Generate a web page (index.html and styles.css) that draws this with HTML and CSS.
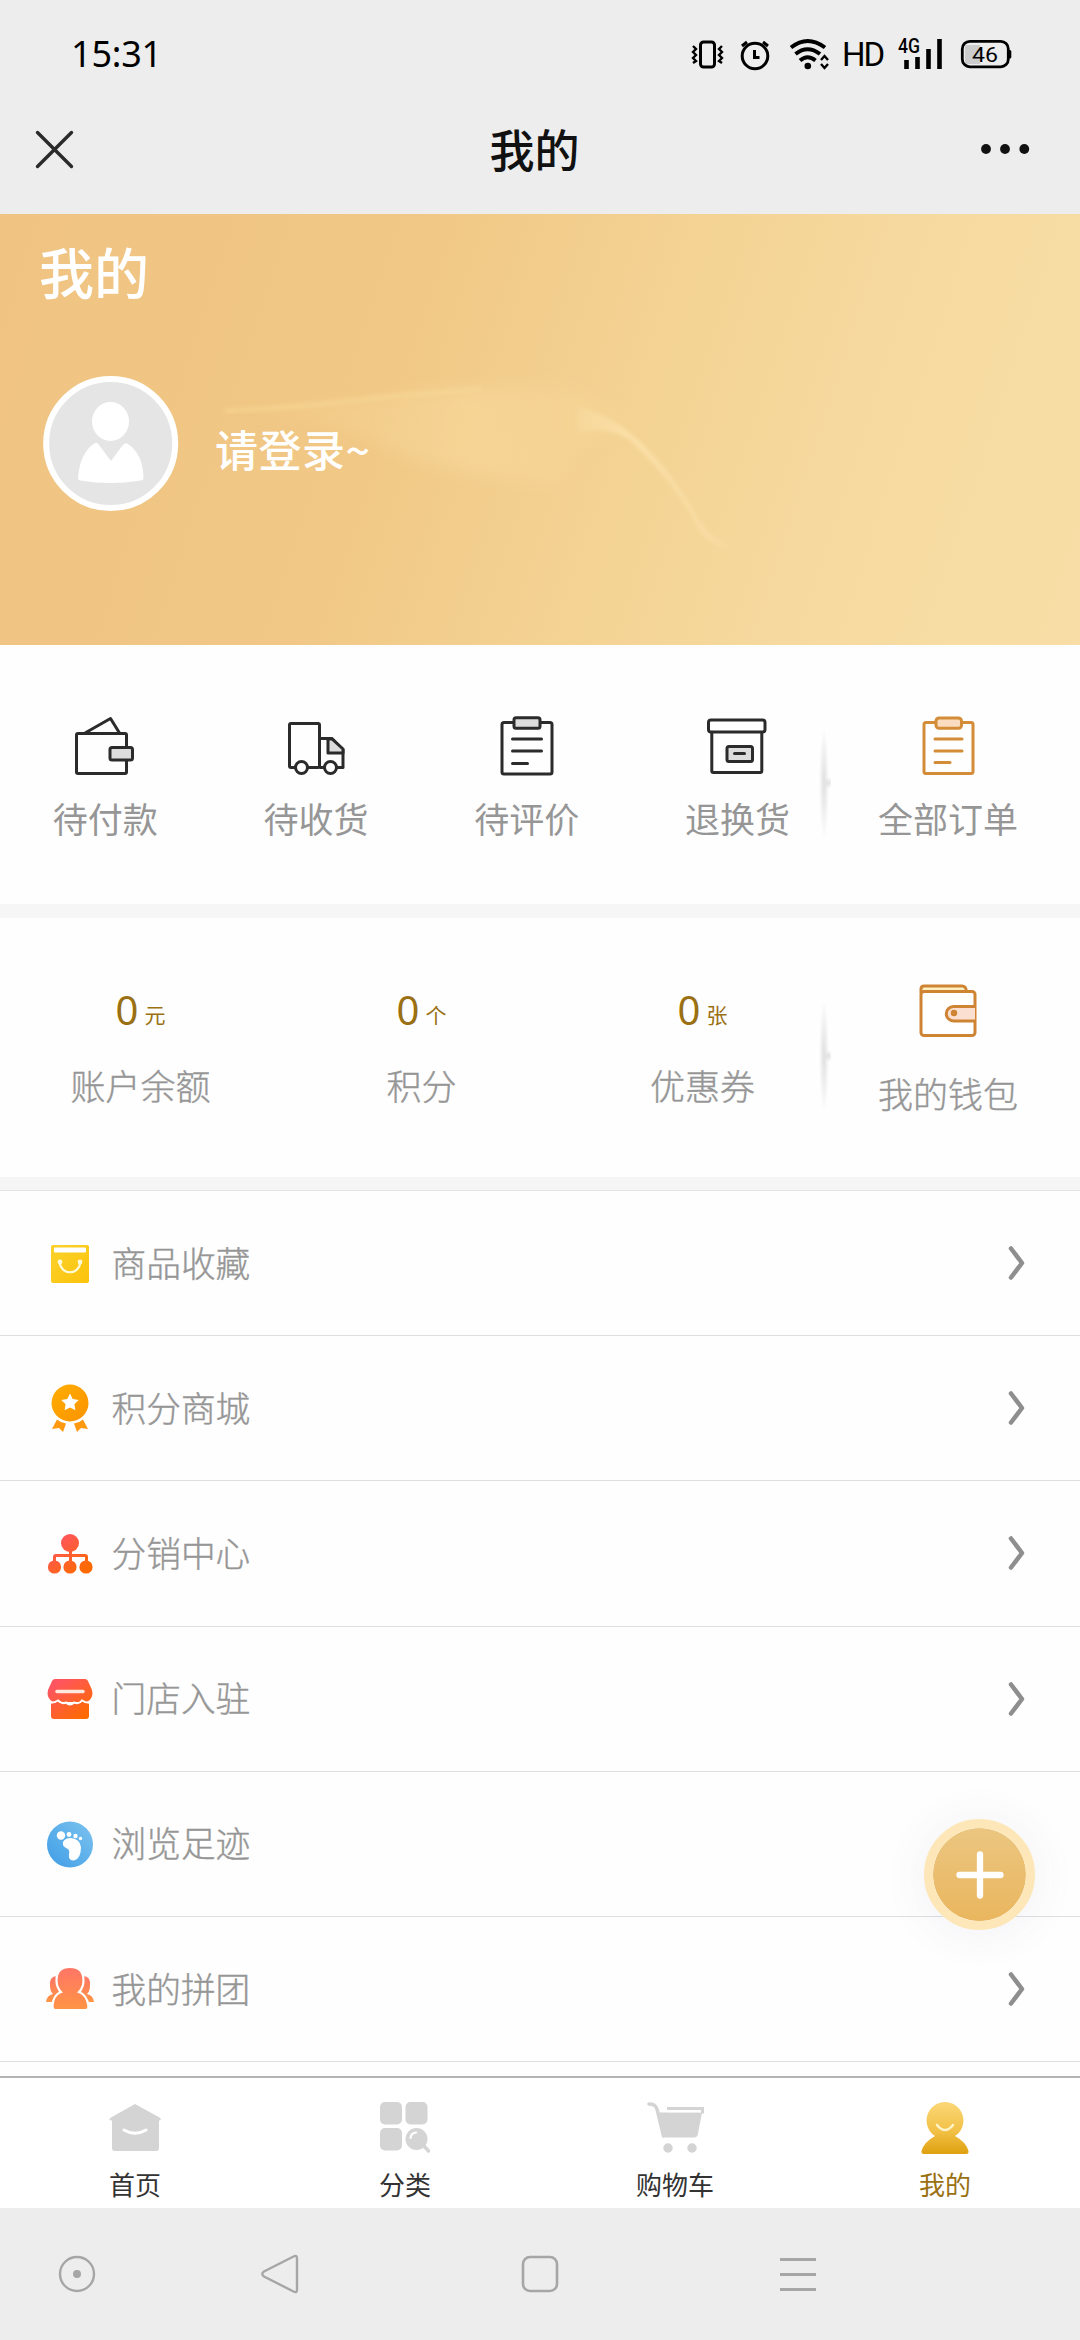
FILE: index.html
```html
<!DOCTYPE html>
<html lang="zh-CN">
<head>
<meta charset="utf-8">
<title>我的</title>
<link rel="stylesheet" href="styles.css">
</head>
<body>
<div class="screen">
  <header class="top">
    <div class="status">
      <span class="time">15:31</span>
      <div class="indicators">
        <svg width="150" height="36" viewBox="690 36 150 36">
          <g fill="none" stroke="#000" stroke-width="3">
            <rect x="700.500" y="42" width="14" height="25" rx="3"/>
            <path d="M693 46l3 3-3 3 3 3-3 3 3 3-3 2M722 46l-3 3 3 3-3 3 3 3-3 3 3 2" stroke-width="2.400"/>
            <circle cx="755" cy="56" r="12.800"/>
            <path d="M754.500 50v7.500h5M742 46l5-4M768 46l-5-4"/>
            <path d="M791 47.500Q807.500 34.500 825 47.500" stroke-width="4"/>
            <path d="M795.500 54Q807.500 44.500 820 54M800 60.500Q807.500 54 815.500 60.500" stroke-width="4"/>
            <path d="M821 60l3.500-4 3.500 4M821 64l3.500 4 3.500-4" stroke-width="2.400"/>
          </g>
          <circle cx="807.800" cy="66" r="3.300"/>
        </svg>
        <span class="hd">HD</span>
        <svg width="124" height="36" viewBox="890 36 124 36">
          <path d="M906.500 60v9M917.500 57v12M928.500 49v20M939.500 39v30" fill="none" stroke="#000" stroke-width="4.600"/>
          <text class="net" x="898" y="53" textLength="22" lengthAdjust="spacingAndGlyphs">4G</text>
          <path d="M966 45h14v19h-14q-1 0-1-2V47q0-2 1-2z" fill="#ccc"/>
          <rect x="962.300" y="41.400" width="46" height="25.400" rx="7.500" fill="none" stroke="#000" stroke-width="2.800"/>
          <rect x="1008" y="50" width="3.300" height="8.500" rx="1.500"/>
          <text class="level" x="972" y="62" textLength="26" lengthAdjust="spacingAndGlyphs">46</text>
        </svg>
      </div>
    </div>
    <div class="titlebar">
      <svg width="40" height="40" viewBox="34 129 40 40"><path d="M37.500 132.500l34 34M71.500 132.500l-34 34" stroke="#2a2a2a" stroke-width="3.400" stroke-linecap="round"/></svg>
      <h1>我的</h1>
      <svg width="50" height="12" viewBox="980 143 50 12" fill="#111"><circle cx="986" cy="149" r="4.900"/><circle cx="1005" cy="149" r="4.900"/><circle cx="1024.300" cy="149" r="4.900"/></svg>
    </div>
  </header>

  <section class="hero">
    <svg class="hero-art" width="1080" height="431" viewBox="0 214 1080 431">
      <defs>
        <linearGradient id="streak" x1="0" x2="1"><stop offset="0" stop-color="#fbe3a6" stop-opacity="0"/><stop offset=".6" stop-color="#fbe3a6" stop-opacity=".35"/><stop offset="1" stop-color="#fbe3a6" stop-opacity="0"/></linearGradient>
        <linearGradient id="tail" x1="0" x2="1"><stop offset="0" stop-color="#fde3ac" stop-opacity=".25"/><stop offset=".4" stop-color="#fde3ac" stop-opacity=".9"/><stop offset="1" stop-color="#fde3ac" stop-opacity=".4"/></linearGradient>
        <filter id="soft"><feGaussianBlur stdDeviation="2"/></filter>
        <filter id="softer" x="-10%" y="-20%" width="120%" height="140%"><feGaussianBlur stdDeviation="8"/></filter>
      </defs>
      <path d="M220 412Q300 408 400 396T560 386Q620 400 640 430Q580 430 560 484Q440 475 370 440Q300 412 220 412z" fill="url(#streak)" filter="url(#softer)"/>
      <path d="M225 411Q290 408 350 401T480 389" fill="none" stroke="#fae09d" stroke-opacity=".6" stroke-width="3" filter="url(#soft)"/>
      <path d="M577 406Q612 415 640 442T692 508Q706 538 732 548Q706 546 694 520Q672 478 630 440Q608 426 577 433z" fill="url(#tail)" filter="url(#soft)"/>
    </svg>
    <h2>我的</h2>
    <div class="user">
      <svg class="avatar" width="136" height="136" viewBox="43 376 136 136">
        <circle cx="110.700" cy="443.500" r="64.500" fill="#e6e5e5" stroke="#fff" stroke-width="6"/>
        <ellipse cx="110.500" cy="421.500" rx="18.500" ry="19.500" fill="#fff"/>
        <path d="M95 443q2-1 4 2l12 16 11-15q3-4 6-2 15 10 15.500 34 0 2-3 2.500-30 5-60 0-3-1-2.500-3 2-25 17-34.500z" fill="#fff"/>
      </svg>
      <span>请登录~</span>
    </div>
  </section>

  <section class="panel orders">
    <div class="cell">
      <svg width="60" height="60" viewBox="75 716 60 60" fill="none" stroke="#2b2b2b" stroke-width="3" stroke-linejoin="round"><path d="M85 733l25.500-14.500 9 14.500"/><rect x="76.500" y="733.500" width="50" height="40" rx="1.500"/><rect x="110" y="747.500" width="22.500" height="12.500" rx="2" fill="#ddd"/></svg>
      <span>待付款</span>
    </div>
    <div class="cell">
      <svg width="60" height="60" viewBox="286 716 60 60" fill="none" stroke="#2b2b2b" stroke-width="3" stroke-linejoin="round"><rect x="289.500" y="723.500" width="30" height="44" rx="1.500"/><path d="M319.500 738.500h12.500l11 11v18h-23.500"/><path d="M328 739v14h15v-4l-11-10z" fill="#ddd"/><circle cx="301.500" cy="767.500" r="6" fill="#fff"/><circle cx="330.500" cy="767.500" r="6" fill="#fff"/></svg>
      <span>待收货</span>
    </div>
    <div class="cell">
      <svg width="60" height="60" viewBox="497 716 60 60" fill="none" stroke="#2b2b2b" stroke-width="3" stroke-linejoin="round" stroke-linecap="round"><rect x="502" y="722.500" width="50" height="51.500" rx="2"/><rect x="514" y="717.800" width="26" height="10.500" rx="2" fill="#ddd"/><path d="M512.500 739h29M512.500 751h29M512.500 763.500h15"/></svg>
      <span>待评价</span>
    </div>
    <div class="cell">
      <svg width="60" height="60" viewBox="708 716 60 60" fill="none" stroke="#2b2b2b" stroke-width="3" stroke-linejoin="round" stroke-linecap="round"><rect x="712.800" y="731" width="50" height="41.500" rx="1.500"/><rect x="709.500" y="720" width="56.500" height="12" rx="2.500" fill="#fff"/><rect x="728" y="746.500" width="25.500" height="15" rx="2" fill="#ddd"/><path d="M735.500 753.500h10"/></svg>
      <span>退换货</span>
    </div>
    <div class="cell">
      <svg width="60" height="60" viewBox="918 716 60 60" fill="none" stroke="#d38c37" stroke-width="3" stroke-linejoin="round" stroke-linecap="round"><rect x="924" y="722.500" width="49" height="51" rx="2"/><rect x="936" y="718" width="25.500" height="10.300" rx="3" fill="#fbdcc0"/><path d="M935 739h27M935 751h27M935 762.500h15"/></svg>
      <span>全部订单</span>
    </div>
    <i class="divider"></i>
  </section>

  <section class="panel assets">
    <div class="cell"><b>0<small>元</small></b><span>账户余额</span></div>
    <div class="cell"><b>0<small>个</small></b><span>积分</span></div>
    <div class="cell"><b>0<small>张</small></b><span>优惠券</span></div>
    <div class="cell wallet">
      <svg width="60" height="60" viewBox="918 981 60 60" fill="none" stroke="#cf8434" stroke-width="3" stroke-linejoin="round"><path d="M921 993v-4q0-3 3-3h38q4 0 4.500 5.500" fill="#fdf0c0"/><rect x="921" y="991.500" width="54" height="44" rx="3" fill="#fff"/><path d="M975 1006.500h-21.500a7.200 7.200 0 0 0 0 14.400H975" fill="#fbe0d2"/><circle cx="954" cy="1013" r="1.700"/></svg>
      <span>我的钱包</span>
    </div>
    <i class="divider"></i>
  </section>

  <main class="list">
    <svg width="0" height="0" class="defs"><defs>
      <linearGradient id="yellow" x1="0" y1="0" x2="1" y2="1"><stop offset="0" stop-color="#fad22d"/><stop offset="1" stop-color="#fcc30b"/></linearGradient>
      <linearGradient id="orange" x1="0" y1="0" x2="1" y2="1"><stop offset="0" stop-color="#ffae00"/><stop offset="1" stop-color="#fb9200"/></linearGradient>
      <linearGradient id="red" gradientUnits="userSpaceOnUse" x1="12" y1="10" x2="38" y2="44"><stop offset="0" stop-color="#ff5560"/><stop offset="1" stop-color="#ff6a00"/></linearGradient>
      <linearGradient id="blue" x1="1" y1="0" x2="0" y2="1"><stop offset="0" stop-color="#7cc3ef"/><stop offset="1" stop-color="#409de6"/></linearGradient>
      <linearGradient id="coral" x1="0" y1="0" x2="0" y2="1"><stop offset="0" stop-color="#ff7567"/><stop offset="1" stop-color="#ff9544"/></linearGradient>
      <symbol id="chevron" viewBox="0 0 18 36"><path d="M3 3.500l11 14.500L3 32.500" fill="none" stroke="#8e8e8e" stroke-width="4.500" stroke-linecap="round" stroke-linejoin="round"/></symbol>
    </defs></svg>
    <div class="row">
      <svg width="50" height="50" viewBox="0 0 50 50"><rect x="6" y="7" width="38" height="38" rx="2" fill="url(#yellow)"/><rect x="9" y="9.500" width="32" height="5" rx="1" fill="#fff"/><path d="M14.500 24.500c2 13 19 13 21 0" fill="none" stroke="#fffbd8" stroke-width="2.200"/><circle cx="15" cy="24" r="2.400" fill="#fffbd8"/><circle cx="35" cy="24" r="2.400" fill="#fffbd8"/></svg>
      <span>商品收藏</span><svg class="go" width="18" height="36"><use href="#chevron"/></svg>
    </div>
    <div class="row">
      <svg width="50" height="50" viewBox="0 0 50 50"><circle cx="25" cy="20" r="18.500" fill="url(#orange)"/><path d="M25 10.500l2.700 5.500 6 .900-4.300 4.300 1 6.100-5.400-2.900-5.400 2.900 1-6.100-4.300-4.300 6-.900z" fill="#fff"/><path d="M12 36.500q4 3.500 9 4l-3 8.500-4-4-7 1zM38 36.500q-4 3.500-9 4l3 8.500 4-4 7 1z" fill="#ff9a10"/></svg>
      <span>积分商城</span><svg class="go" width="18" height="36"><use href="#chevron"/></svg>
    </div>
    <div class="row">
      <svg width="50" height="50" viewBox="0 0 50 50"><g fill="url(#red)"><circle cx="25" cy="15" r="9"/><circle cx="9.500" cy="39" r="6.600"/><circle cx="25" cy="39" r="6.600"/><circle cx="41" cy="39" r="6.600"/><path d="M24 22h3v4h13q3 0 3 3v5h-3v-5H27v5h-3v-5H11v5H8v-5q0-3 3-3h13z"/></g></svg>
      <span>分销中心</span><svg class="go" width="18" height="36"><use href="#chevron"/></svg>
    </div>
    <div class="row">
      <svg width="50" height="50" viewBox="0 0 50 50"><path d="M10 5h30q2 0 3 2l4 9q2 8-5 12H8q-7-4-5-12l4-9q1-2 3-2z" fill="url(#red)"/><path d="M6 29q4 0 7-2 4 4 8 2 4 4 8 0 5 2 8-2 3 2 7 2v13q0 3-3 3H9q-3 0-3-3z" fill="url(#red)"/><path d="M3 28.500q6 1 10-2 4 4 8 2 4 4 8 0 5 2 8-2 4 3 10 2" fill="none" stroke="#fff" stroke-width="2"/><path d="M12 17.500h26" stroke="#ffe9df" stroke-width="3.500" stroke-linecap="round"/></svg>
      <span>门店入驻</span><svg class="go" width="18" height="36"><use href="#chevron"/></svg>
    </div>
    <div class="row covered">
      <svg width="50" height="50" viewBox="0 0 50 50"><circle cx="25" cy="25.500" r="23" fill="url(#blue)"/><g fill="#fff"><circle cx="16" cy="16.500" r="4.200"/><circle cx="24" cy="15.500" r="2.400"/><circle cx="30.500" cy="17" r="2.200"/><circle cx="35.500" cy="19.500" r="1.700"/><path d="M18 23q2-4 8-4 9 1 10 9 0 12-7 13.500-6 0-5-6 1-5-2-6-5-2-4-6.500z"/></g></svg>
      <span>浏览足迹</span>
    </div>
    <div class="row">
      <svg width="50" height="50" viewBox="0 0 50 50"><path d="M12 12q-8 0-7 10 0 5 3 8-6 1-7 8h14zM38 12q8 0 7 10 0 5-3 8 6 1 7 8H35z" fill="url(#coral)"/><path d="M25 3q13.500 0 13.500 13.500 0 7-4.500 11.500 8 3 9.500 14 0 4-3 4H10.500q-3 0-3-4Q8 31 16 28q-4.500-4.500-4.500-11.500Q11.500 3 25 3z" fill="url(#coral)" stroke="#fff" stroke-width="2.200"/></svg>
      <span>我的拼团</span><svg class="go" width="18" height="36"><use href="#chevron"/></svg>
    </div>
    <button class="fab" aria-label="更多"><svg width="50" height="50" viewBox="0 0 50 50"><path d="M25 4.500v41M4.500 25h41" stroke="#fff" stroke-width="6.300" stroke-linecap="round"/></svg></button>
  </main>

  <nav class="tabs">
    <a><svg width="60" height="60" viewBox="105 2097 60 60"><path d="M135 2104l24.500 13.500q3 2.500-.5 3v27.500q0 3-3 3h-41q-3 0-3-3v-27.500q-5-.500-1-3z" fill="#d4d4d4"/><path d="M124 2130q11 6.500 22 0" fill="none" stroke="#fff" stroke-width="3" stroke-linecap="round"/></svg><span>首页</span></a>
    <a><svg width="60" height="60" viewBox="375 2097 60 60" fill="#d4d4d4"><rect x="380" y="2102" width="22" height="22.500" rx="5"/><rect x="405.500" y="2102" width="22" height="22.500" rx="5"/><rect x="380" y="2128" width="22" height="22.500" rx="5"/><circle cx="416.500" cy="2139" r="11"/><path d="M424 2146l4.500 5" stroke="#d4d4d4" stroke-width="3.500" stroke-linecap="round"/><path d="M410.500 2138q.5-5 5.500-5.500" fill="none" stroke="#fff" stroke-width="2.200" stroke-linecap="round"/></svg><span>分类</span></a>
    <a><svg width="60" height="60" viewBox="645 2097 60 60" fill="#d4d4d4"><path d="M649 2104q6 0 7.500 4l1 3 6 25" fill="none" stroke="#d4d4d4" stroke-width="3.500" stroke-linecap="round"/><path d="M657 2112.500h45l-4 21q-.500 4-4 4h-28q-3.500 0-4-3.500z"/><path d="M667 2108.500h35.500v5" fill="none" stroke="#d4d4d4" stroke-width="3"/><path d="M668 2111.500h33" stroke="#fff" stroke-width="1.500"/><circle cx="668" cy="2148" r="4.700"/><circle cx="692" cy="2148" r="4.700"/></svg><span>购物车</span></a>
    <a class="active"><svg width="60" height="60" viewBox="915 2097 60 60"><defs><linearGradient id="gold" x1="0" y1="0" x2="0" y2="1"><stop offset="0" stop-color="#fbd777"/><stop offset=".55" stop-color="#f2c147"/><stop offset="1" stop-color="#dfa010"/></linearGradient></defs><path d="M945 2102a18.500 18.500 0 0 1 10 34q11 6 13.500 15 .500 3-2.500 3h-42q-3 0-2.500-3 2.500-9 13.500-15a18.500 18.500 0 0 1 10-34z" fill="url(#gold)"/><path d="M937 2125q8 10 16 0" fill="none" stroke="#fff3c8" stroke-width="2.600" stroke-linecap="round"/></svg><span>我的</span></a>
  </nav>

  <footer class="sysnav">
    <svg width="40" height="44" viewBox="57 2252 40 44" fill="none" stroke="#a6a6a6" stroke-width="2.400"><circle cx="77" cy="2274" r="17"/><circle cx="77" cy="2274" r="4" fill="#a6a6a6" stroke="none"/></svg>
    <svg width="40" height="44" viewBox="260 2252 40 44" fill="none" stroke="#a6a6a6" stroke-width="2.400"><path d="M293.500 2256.500Q297 2254.500 297 2258.500v31q0 4-3.500 2L264 2276.500q-3.500-2.500 0-5z"/></svg>
    <svg width="40" height="44" viewBox="520 2252 40 44" fill="none" stroke="#a6a6a6" stroke-width="2.600"><rect x="523" y="2257" width="34" height="34" rx="7"/></svg>
    <svg width="40" height="44" viewBox="778 2252 40 44" stroke="#a6a6a6" stroke-width="2.800"><path d="M780 2259.500h36M780 2274.500h36M780 2289.500h36"/></svg>
  </footer>
</div>
</body>
</html>
```

FILE: styles.css
```css
* { box-sizing: border-box; margin: 0; padding: 0; }
body {
  width: 1080px;
  background: #fefefe;
  color: #969696;
  font-family: "Noto Sans CJK SC", sans-serif;
  font-size: 35px;
  line-height: 1;
}
svg { display: block; flex: none; }
.screen { display: flex; flex-direction: column; height: 2340px; overflow: hidden; }

.top { height: 214px; background: #ededed; color: #111; }
.status {
  display: flex;
  align-items: flex-start;
  justify-content: space-between;
  height: 86px;
  padding: 36px 66px 0 71px;
}
.time { font: 36px/36px "Noto Sans", sans-serif; letter-spacing: -.2px; color: #000; }
.indicators { display: flex; }
.hd { width: 50px; padding-left: 2px; font: 33px/37px "Roboto", sans-serif; letter-spacing: -2px; color: #000; }
.net { font: 500 19.500px "Roboto", sans-serif; }
.level { font: 21px "Roboto", sans-serif; }
.titlebar {
  display: flex;
  align-items: center;
  justify-content: space-between;
  height: 126px;
  padding: 0 50px 0 34px;
}
.titlebar h1 { padding-left: 15px; font-size: 45px; font-weight: 500; line-height: 60px; }

.hero {
  position: relative;
  height: 431px;
  padding: 23px 39px;
  background: linear-gradient(108deg, #f0c382 0%, #f1c886 36%, #f4d495 60%, #f6daa0 78%, #f8dea6 100%);
  color: #fff;
}
.hero-art { position: absolute; inset: 0; }
.hero h2 { position: relative; font-size: 55px; font-weight: 500; line-height: 66px; }
.user {
  position: relative;
  display: flex;
  align-items: center;
  gap: 36px;
  margin: 73px 0 0 4px;
}
.user span { font-size: 43px; font-weight: 500; line-height: 60px; letter-spacing: .5px; padding-top: 7px; }

.panel { position: relative; display: grid; }
.cell { display: flex; flex-direction: column; align-items: center; }
.cell span { line-height: 44px; }
.orders {
  grid-template-columns: repeat(5, 210.700px);
  height: 273px;
  padding-top: 71px;
  border-bottom: 14px solid #f6f6f6;
}
.orders .cell { gap: 20px; }
.assets {
  grid-template-columns: repeat(3, 281px) 210px;
  height: 272px;
  padding-top: 63px;
  border-bottom: 13px solid #f5f5f5;
  font-weight: 300;
}
.assets span, .row span { -webkit-text-stroke: .4px currentColor; }
.assets b {
  display: flex;
  align-items: baseline;
  gap: 6px;
  height: 60px;
  font: 400 40px/58px "Noto Sans", sans-serif;
  color: #9a7012;
}
.assets small { font: 400 21px/30px "Noto Sans CJK SC", sans-serif; position: relative; top: -2px; }
.assets .cell { gap: 22px; }
.assets .wallet { gap: 30px; }
.divider {
  position: absolute;
  left: 819px;
  top: 84px;
  width: 12px;
  height: 108px;
  background:
    radial-gradient(circle 6px at 9px 50%, #e2e2e2, transparent),
    radial-gradient(ellipse 5px 56px at 5px 50%, #e0e0e0, transparent);
}

.list { position: relative; height: 885.500px; font-weight: 300; border-top: 1px solid #e4e4e4; }
.defs { position: absolute; }
.row {
  display: flex;
  align-items: center;
  gap: 16.500px;
  height: 145.200px;
  padding: 0 54px 0 45px;
  border-bottom: 1px solid #dedede;
}
.row span { flex: 1; font-size: 34.700px; line-height: 44px; padding-bottom: 3px; }
.fab {
  position: absolute;
  left: 924px;
  top: 628px;
  display: grid;
  place-items: center;
  width: 111px;
  height: 111px;
  border: 9px solid #fde7b9;
  border-radius: 50%;
  background: linear-gradient(#ebc680, #eab65f) padding-box;
  box-shadow: 0 3px 45px rgba(90, 80, 130, .08);
}

.tabs {
  display: grid;
  grid-template-columns: repeat(4, 1fr);
  height: 132px;
  border-top: 2px solid #b4b4b4;
  background: #fff;
  color: #333;
  font-size: 26px;
}
.tabs a { display: flex; flex-direction: column; align-items: center; gap: 9px; padding-top: 19px; }
.tabs span { line-height: 36px; }
.tabs .active { color: #9a7012; }

.sysnav {
  display: grid;
  grid-template-columns: 203px 260px 258px 40px;
  align-items: start;
  flex: 1;
  padding: 44px 0 0 57px;
  background: #ededed;
}
```
